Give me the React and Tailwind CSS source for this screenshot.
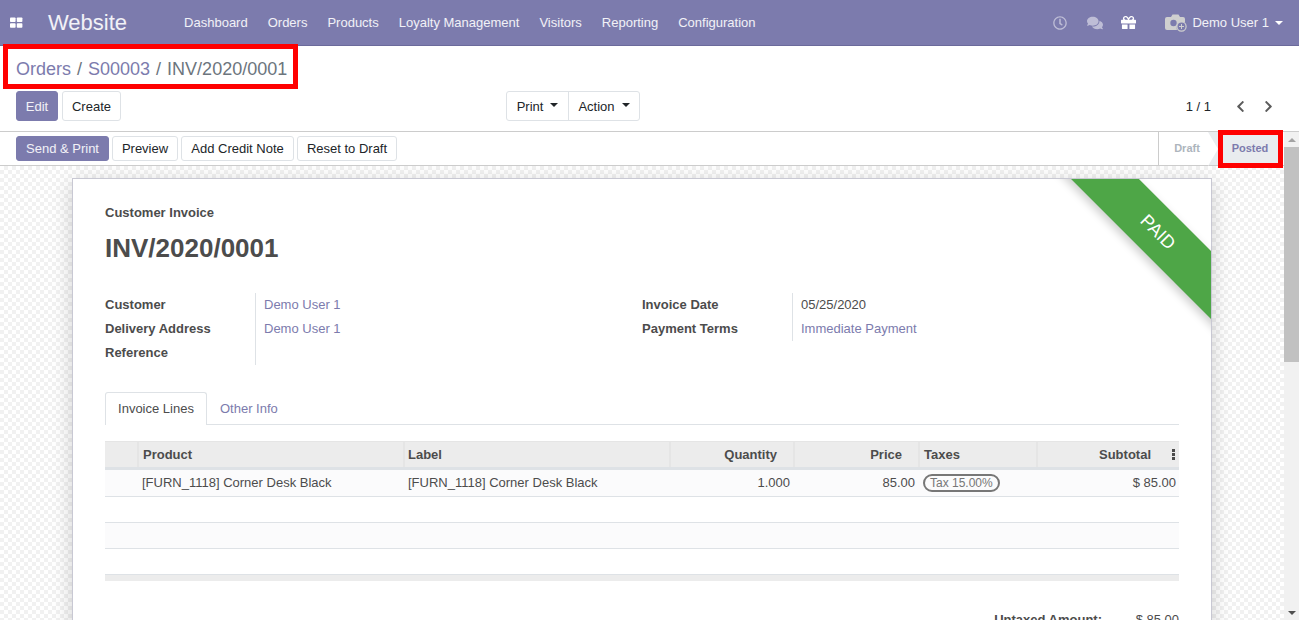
import React from "react";
import { FaRegClock, FaComments, FaGift, FaChevronLeft, FaChevronRight } from "react-icons/fa";

const cols = "grid grid-cols-[34px_266px_266px_124px_125px_118px_141px]";

function Caret({ className = "" }) {
  return <span className={`inline-block w-0 h-0 border-x-[4px] border-x-transparent border-t-[4px] border-t-current ${className}`} />;
}

function Btn({ children, primary, className = "" }) {
  return (
    <button className={`h-[25px] px-[10px] rounded-[3px] border text-[13px] leading-none ${primary ? "bg-[#7c7bad] border-[#7c7bad] text-white/90" : "bg-white border-[#dee2e6] text-[#212529]"} ${className}`}>
      {children}
    </button>
  );
}

function Field({ label, children }) {
  return (
    <div className="flex h-[24px] items-center">
      <div className="w-[150px] font-bold text-[#4c4c4c]">{label}</div>
      <div className="h-full flex items-center pl-2 border-l border-[#dee2e6]">{children}</div>
    </div>
  );
}

const Link = ({ children }) => <span className="text-[#7c7bad]">{children}</span>;

function Head({ children, right, className = "" }) {
  return (
    <div className={`flex items-center px-[3px] font-bold text-[#4c4c4c] border-r-2 border-[#e5e5e5] ${right ? "justify-end pr-[16px]" : ""} ${className}`}>
      {children}
    </div>
  );
}

export default function App() {
  return (
    <div className="relative h-[620px] w-[1299px] overflow-hidden flex flex-col bg-white font-['Liberation_Sans',Arial,sans-serif] text-[13px] text-[#4c4c4c]">
      <nav className="h-[46px] shrink-0 bg-[#7c7bad] border-b border-[#6b6a9b] flex items-center text-white/90">
        <svg width="13" height="12" viewBox="0 0 13 12" className="ml-[10px] fill-white">
          <rect x="0" y="0.5" width="5.6" height="4.6" rx="0.8" />
          <rect x="6.8" y="0.5" width="5.6" height="4.6" rx="0.8" />
          <rect x="0" y="6.2" width="5.6" height="4.6" rx="0.8" />
          <rect x="6.8" y="6.2" width="5.6" height="4.6" rx="0.8" />
        </svg>
        <span className="ml-[25px] text-[22px] leading-none text-white/90">Website</span>
        <div className="ml-[57px] flex gap-[20px]">
          {["Dashboard", "Orders", "Products", "Loyalty Management", "Visitors", "Reporting", "Configuration"].map((t) => (
            <span key={t}>{t}</span>
          ))}
        </div>
        <div className="ml-auto flex items-center">
          <FaRegClock className="text-[14px] text-white/50" />
          <FaComments className="ml-[20px] text-[16px] text-white/50" />
          <FaGift className="ml-[18px] text-[15px] text-white" />
          <svg width="23" height="18" viewBox="0 0 23 18" className="ml-[29px]">
            <path d="M2 3h4l1.5-2.5h6L15 3h3a2 2 0 0 1 2 2v3.5a6 6 0 0 0-8 7.5H2a2 2 0 0 1-2-2V5a2 2 0 0 1 2-2z" fill="#cfcfcf" />
            <circle cx="8.5" cy="9" r="3.2" fill="#7c7bad" />
            <circle cx="16.5" cy="12.5" r="4.6" fill="#7c7bad" stroke="#cfcfcf" strokeWidth="1.2" />
            <path d="M16 10h1v2h2v1h-2v2h-1v-2h-2v-1h2z" fill="#cfcfcf" />
          </svg>
          <span className="ml-[4px]">Demo User 1</span>
          <span className="ml-[6px] mr-[16px] flex text-white"><Caret /></span>
        </div>
      </nav>

      <div className="h-[86px] shrink-0 border-b border-[#cccccc] px-4 flex flex-col">
        <div className="h-[45px] flex items-center text-[18px] text-[#6c757d] gap-[6px] pt-[1px]">
          <Link>Orders</Link><span>/</span><Link>S00003</Link><span>/</span><span>INV/2020/0001</span>
        </div>
        <div className="relative flex items-center h-[30px]">
          <div className="flex gap-1">
            <Btn primary className="h-[30px]! w-[42px] px-0!">Edit</Btn>
            <Btn className="h-[30px]! w-[59px] px-0!">Create</Btn>
          </div>
          <div className="ml-[385px] flex h-[30px] rounded-[3px] border border-[#dee2e6] text-[#212529]">
            <div className="w-[62px] pt-[1px] flex items-center justify-center gap-[7px] border-r border-[#dee2e6]">Print <Caret className="mb-[4px]" /></div>
            <div className="w-[70px] pt-[1px] flex items-center justify-center gap-[7px]">Action <Caret className="mb-[4px]" /></div>
          </div>
          <div className="ml-auto pt-[1px] flex items-center text-[#212529]">
            <span>1 / 1</span>
            <FaChevronLeft className="ml-[23px] text-[13px] text-[#5c5c5c]" />
            <FaChevronRight className="ml-[15px] mr-[8px] text-[13px] text-[#5c5c5c]" />
          </div>
        </div>
      </div>

      <div className="flex-1 min-h-0 flex">
        <div className="flex-1 min-w-0 flex flex-col">
          <div className="h-[34px] shrink-0 border-b border-[#cccccc] pl-4 flex items-center">
            <div className="flex gap-[3px]">
              <Btn primary className="w-[93px] px-0!">Send &amp; Print</Btn>
              <Btn className="w-[66px] px-0!">Preview</Btn>
              <Btn className="w-[113px] px-0!">Add Credit Note</Btn>
              <Btn className="w-[100px] px-0!">Reset to Draft</Btn>
            </div>
            <div className="ml-auto flex h-full items-stretch text-[11px] font-bold mr-[1px]">
              <div className="w-[50px] border-l border-[#cccccc] flex items-center justify-center text-[#adb5bd] pl-[7px]">Draft</div>
              <div className="relative w-[75px] bg-[#e9ecef] flex items-center justify-center text-[#7c7bad] pl-[9px]">
                <span className="absolute left-0 top-0 w-0 h-0 border-y-[17px] border-y-transparent border-l-[10px] border-l-white" />
                Posted
              </div>
            </div>
          </div>

          <main className="flex-1 min-h-0 overflow-hidden pt-[12px] pl-[72px] bg-[repeating-conic-gradient(#f1f1f1_0%_25%,#ffffff_0%_50%)] bg-[length:8px_8px]">
            <section className="relative w-[1140px] h-[600px] bg-white border border-[#c8c8d3] shadow-[0_5px_20px_-1px_rgba(0,0,0,0.2)] overflow-hidden px-[32px] pt-[26px]">
              <div className="absolute top-[29px] right-[-77px] w-[260px] h-[48px] bg-[#4ea647] rotate-45 flex items-center justify-center text-white text-[18px] shadow-[0_4px_10px_rgba(0,0,0,0.2)]">PAID</div>

              <div className="font-bold leading-[15px]">Customer Invoice</div>
              <h1 className="mt-[13px] text-[26px] leading-[30px] font-bold">INV/2020/0001</h1>

              <div className="mt-[30px] flex">
                <div className="w-[537px]">
                  <Field label="Customer"><Link>Demo User 1</Link></Field>
                  <Field label="Delivery Address"><Link>Demo User 1</Link></Field>
                  <Field label="Reference"><span /></Field>
                </div>
                <div>
                  <Field label="Invoice Date">05/25/2020</Field>
                  <Field label="Payment Terms"><Link>Immediate Payment</Link></Field>
                </div>
              </div>

              <div className="mt-[27px] h-[33px] border-b border-[#dee2e6] flex">
                <div className="w-[102px] h-[33px] bg-white border border-b-0 border-[#dee2e6] rounded-t-[3px] flex items-center justify-center">Invoice Lines</div>
                <div className="ml-[13px] pt-[1px] flex items-center text-[#7c7bad]">Other Info</div>
              </div>

              <div className="mt-[16px] w-[1074px]">
                <div className={`${cols} h-[29px] bg-[#ececec] border-t border-[#e5e5e5] border-b-[3px] border-b-[#dee2e6]`}>
                  <Head />
                  <Head className="pl-[4px]">Product</Head>
                  <Head>Label</Head>
                  <Head right>Quantity</Head>
                  <Head right>Price</Head>
                  <Head className="pl-[4px]">Taxes</Head>
                  <div className="relative flex items-center justify-end pr-[28px] font-bold">
                    Subtotal
                    <span className="absolute right-[4px] top-[7px] flex flex-col gap-[1px]">
                      <i className="block w-[3px] h-[3px] bg-[#4c4c4c]" />
                      <i className="block w-[3px] h-[3px] bg-[#4c4c4c]" />
                      <i className="block w-[3px] h-[3px] bg-[#4c4c4c]" />
                    </span>
                  </div>
                </div>
                <div className={`${cols} h-[27px] items-center bg-[#fbfbfc] border-b border-[#dee2e6]`}>
                  <span />
                  <span className="pl-[3px]">[FURN_1118] Corner Desk Black</span>
                  <span className="pl-[3px]">[FURN_1118] Corner Desk Black</span>
                  <span className="text-right pr-[5px]">1.000</span>
                  <span className="text-right pr-[5px]">85.00</span>
                  <span className="pl-[3px]">
                    <span className="inline-flex h-[18px] items-center px-[5px] rounded-full border-2 border-[#777777] text-[#777777] text-[12px] leading-none">Tax 15.00%</span>
                  </span>
                  <span className="text-right pr-[3px]">$ 85.00</span>
                </div>
                <div className="h-[26px] border-b border-[#dee2e6]" />
                <div className="h-[26px] bg-[#fbfbfc] border-b border-[#dee2e6]" />
                <div className="h-[26px] border-b border-[#dee2e6]" />
                <div className="h-[6px] bg-[#ececec]" />
              </div>

              <div className="mt-[29px] flex justify-end font-bold">
                <span>Untaxed Amount:</span>
                <span className="w-[77px] text-right font-normal">$ 85.00</span>
              </div>
            </section>
          </main>
        </div>
        <div className="w-[15px] shrink-0 bg-[#f1f1f1] flex flex-col items-center">
          <span className="mt-[6px] w-0 h-0 border-x-[4px] border-x-transparent border-b-[4px] border-b-[#a3a3a3]" />
          <div className="mt-[5px] w-full h-[215px] bg-[#c1c1c1]" />
          <span className="mt-auto mb-[5px] w-0 h-0 border-x-[4px] border-x-transparent border-t-[4px] border-t-[#505050]" />
        </div>
      </div>

      <div className="absolute left-[3px] top-[44px] w-[295px] h-[45px] border-[5px] border-[#ff0000]" />
      <div className="absolute left-[1218px] top-[130px] w-[65px] h-[38px] border-[5px] border-[#ff0000]" />
    </div>
  );
}
